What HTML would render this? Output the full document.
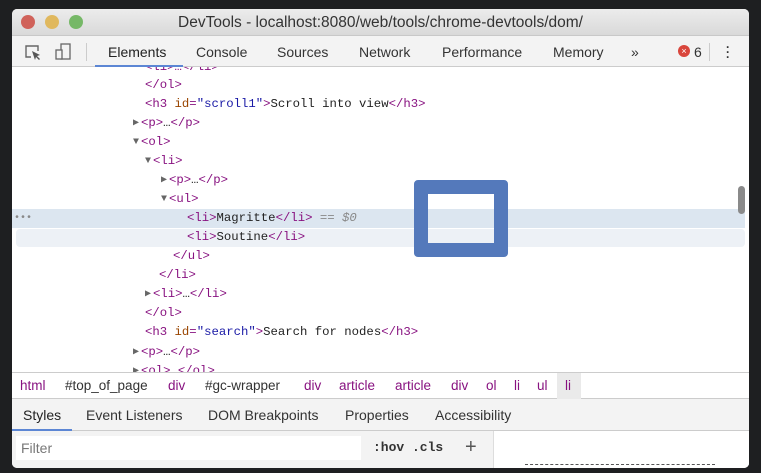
<!DOCTYPE html>
<html><head><meta charset="utf-8"><style>
*{margin:0;padding:0;box-sizing:border-box}
body{width:761px;height:473px;background:#1e1f21;position:relative;overflow:hidden;font-family:"Liberation Sans",sans-serif}
#win{position:absolute;left:12px;top:9px;width:737px;height:459px;background:#fff;border-radius:5px;overflow:hidden}
#title{position:absolute;left:0;top:0;width:100%;height:27px;background:linear-gradient(#ececec,#d9d9d9);border-bottom:1px solid #c8c8c8;text-align:center;font-size:15.5px;line-height:27px;color:#333}
.dot{position:absolute;top:6px;width:14px;height:14px;border-radius:50%}
#tb{position:absolute;left:0;top:27px;width:100%;height:31px;background:#f3f3f3;border-bottom:1px solid #ccc;font-size:14px;color:#333;z-index:2}
#tb span{position:absolute;top:8px}
#code{position:absolute;left:0;top:58px;width:100%;height:305px;font-family:"Liberation Mono",monospace;font-size:12.3px;color:#222;overflow:hidden}
.l{position:absolute;height:19px;line-height:19px;white-space:pre}
.t{color:#881280}.a{color:#994500}.v{color:#1a1aa6}.g{color:#888}
.ar{color:#666;font-size:10px;display:inline-block;width:8px;vertical-align:top;line-height:19px}
#bc{position:absolute;left:0;top:363px;width:100%;height:27px;border-top:1px solid #ccc;border-bottom:1px solid #ccc;background:#fff;font-size:13.5px;color:#881280;line-height:26px}
#bc span{position:absolute}
#st{position:absolute;left:0;top:390px;width:100%;height:32px;background:#f3f3f3;border-bottom:1px solid #ccc;font-size:14px;color:#333;line-height:32px}
#st span{position:absolute}
#fl{position:absolute;left:0;top:422px;width:100%;height:37px;background:#f3f3f3}
</style></head><body>
<div id="win">
<div id="title">
<div class="dot" style="left:9px;background:#d0625a"></div>
<div class="dot" style="left:33px;background:#e0b85e"></div>
<div class="dot" style="left:57px;background:#76b867"></div>
DevTools - localhost:8080/web/tools/chrome-devtools/dom/</div>
<div id="tb">
<svg style="position:absolute;left:12px;top:7px" width="18" height="18" viewBox="0 0 18 18"><path d="M7 14H2V3h12v5" fill="none" stroke="#666" stroke-width="1.4"/><path d="M8 8l8 4-3 1 3 3-1 1-3-3-1 3z" fill="#555"/></svg>
<svg style="position:absolute;left:42px;top:7px" width="18" height="18" viewBox="0 0 18 18"><rect x="7" y="1" width="9" height="15" fill="none" stroke="#666" stroke-width="1.3"/><rect x="2" y="7" width="6" height="9" fill="#f3f3f3" stroke="#666" stroke-width="1.3"/></svg>
<div style="position:absolute;left:74px;top:7px;width:1px;height:18px;background:#ccc"></div>
<span style="left:96px;color:#222">Elements</span>
<div style="position:absolute;left:83px;top:29px;width:88px;height:2px;background:#5c86d4"></div>
<span style="left:184px">Console</span>
<span style="left:265px">Sources</span>
<span style="left:347px">Network</span>
<span style="left:430px">Performance</span>
<span style="left:541px">Memory</span>
<span style="left:619px">»</span>
<div style="position:absolute;left:666px;top:9px;width:12px;height:12px;border-radius:50%;background:#d9463c;color:#fff;font-size:9px;line-height:12px;text-align:center">×</div>
<span style="left:682px">6</span>
<div style="position:absolute;left:697px;top:7px;width:1px;height:18px;background:#ccc"></div>
<span style="left:714px;font-weight:bold;line-height:5px;top:9px;font-size:12px">·<br>·<br>·</span>
</div>
<div id="code">
<div style="position:absolute;left:0;top:142px;width:733px;height:19px;background:#dce6f0"></div>
<div style="position:absolute;left:4px;top:162px;width:729px;height:18px;background:#edf1f6;border-radius:4px"></div>
<div class="l g" style="left:2px;top:142px;font-size:10px">•••</div>
<div class="l" style="left:133px;top:-9px"><span class="t">&lt;li&gt;…&lt;/li&gt;</span></div>
<div class="l" style="left:133px;top:9px"><span class="t">&lt;/ol&gt;</span></div>
<div class="l" style="left:133px;top:28px"><span class="t">&lt;h3 </span><span class="a">id</span><span class="t">=</span><span class="v">"scroll1"</span><span class="t">&gt;</span>Scroll into view<span class="t">&lt;/h3&gt;</span></div>
<div class="l" style="left:121px;top:47px"><span class="ar">▶</span><span class="t">&lt;p&gt;</span>…<span class="t">&lt;/p&gt;</span></div>
<div class="l" style="left:121px;top:66px"><span class="ar">▼</span><span class="t">&lt;ol&gt;</span></div>
<div class="l" style="left:133px;top:85px"><span class="ar">▼</span><span class="t">&lt;li&gt;</span></div>
<div class="l" style="left:149px;top:104px"><span class="ar">▶</span><span class="t">&lt;p&gt;</span>…<span class="t">&lt;/p&gt;</span></div>
<div class="l" style="left:149px;top:123px"><span class="ar">▼</span><span class="t">&lt;ul&gt;</span></div>
<div class="l" style="left:175px;top:142px"><span class="t">&lt;li&gt;</span>Magritte<span class="t">&lt;/li&gt;</span> <span class="g">== <i>$0</i></span></div>
<div class="l" style="left:175px;top:161px"><span class="t">&lt;li&gt;</span>Soutine<span class="t">&lt;/li&gt;</span></div>
<div class="l" style="left:161px;top:180px"><span class="t">&lt;/ul&gt;</span></div>
<div class="l" style="left:147px;top:199px"><span class="t">&lt;/li&gt;</span></div>
<div class="l" style="left:133px;top:218px"><span class="ar">▶</span><span class="t">&lt;li&gt;</span>…<span class="t">&lt;/li&gt;</span></div>
<div class="l" style="left:133px;top:237px"><span class="t">&lt;/ol&gt;</span></div>
<div class="l" style="left:133px;top:256px"><span class="t">&lt;h3 </span><span class="a">id</span><span class="t">=</span><span class="v">"search"</span><span class="t">&gt;</span>Search for nodes<span class="t">&lt;/h3&gt;</span></div>
<div class="l" style="left:121px;top:276px"><span class="ar">▶</span><span class="t">&lt;p&gt;</span>…<span class="t">&lt;/p&gt;</span></div>
<div class="l" style="left:121px;top:295px"><span class="ar">▶</span><span class="t">&lt;ol&gt;</span>…<span class="t">&lt;/ol&gt;</span></div>
<div style="position:absolute;left:402px;top:113px;width:94px;height:77px;border:14px solid #5479bb;border-radius:4px"></div>
<div style="position:absolute;left:726px;top:119px;width:7px;height:28px;border-radius:4px;background:#8a8a8a"></div>
</div>
<div id="bc">
<span style="left:8px">html</span><span style="left:53px;color:#333">#top_of_page</span><span style="left:156px">div</span><span style="left:193px;color:#333">#gc-wrapper</span><span style="left:292px">div</span><span style="left:327px">article</span><span style="left:383px">article</span><span style="left:439px">div</span><span style="left:474px">ol</span><span style="left:502px">li</span><span style="left:525px">ul</span>
<span style="left:545px;width:24px;background:#eaeaea;padding-left:8px;color:#881280">li</span>
</div>
<div id="st">
<span style="left:11px;color:#222">Styles</span>
<div style="position:absolute;left:0;top:30px;width:60px;height:2px;background:#5c86d4"></div>
<span style="left:74px">Event Listeners</span><span style="left:196px">DOM Breakpoints</span><span style="left:333px">Properties</span><span style="left:423px">Accessibility</span>
</div>
<div id="fl">
<div style="position:absolute;left:4px;top:5px;width:345px;height:24px;background:#fff;font-size:14px;color:#777;line-height:24px;padding-left:5px">Filter</div>
<span style="position:absolute;left:361px;top:9px;font-family:'Liberation Mono',monospace;font-weight:bold;font-size:13px;color:#333">:hov .cls</span>
<span style="position:absolute;left:453px;top:5px;font-size:20px;color:#555">+</span>
<div style="position:absolute;left:481px;top:0;width:256px;height:37px;background:#fff;border-left:1px solid #ddd"></div>
<div style="position:absolute;left:513px;top:33px;width:190px;height:1px;border-top:1px dashed #555"></div>
</div>
</div>
</body></html>
